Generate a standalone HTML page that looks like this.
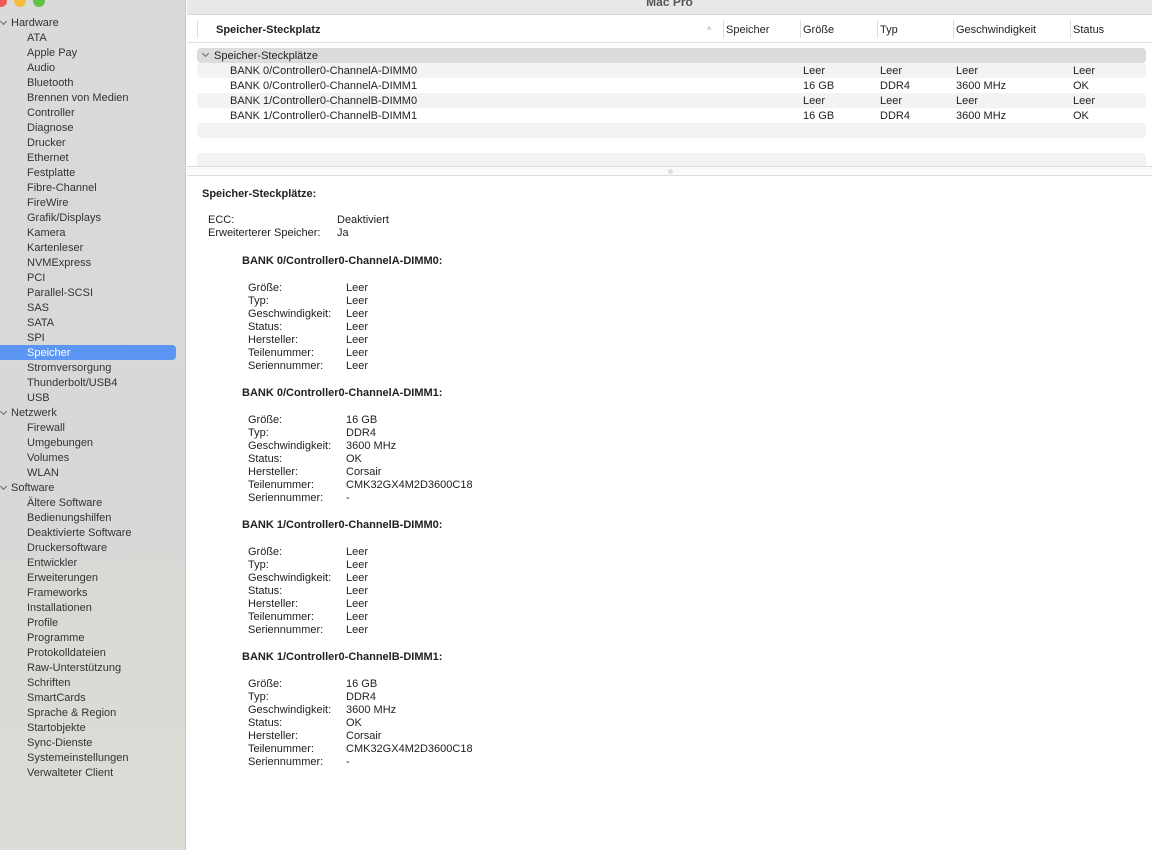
<!DOCTYPE html>
<html><head><meta charset="utf-8"><style>
*{margin:0;padding:0;box-sizing:border-box}
body{width:1152px;height:850px;overflow:hidden;font-family:"Liberation Sans",sans-serif;font-size:11px;color:#222;background:#fff;position:relative}
#side{position:absolute;left:0;top:0;width:186px;height:850px;background:linear-gradient(#dadada,#d8d8d6 60%,#dedcd6);border-right:1px solid #c8c8c8}
#side .l{position:absolute;left:0;width:186px;height:15px;line-height:15px;white-space:nowrap;color:#333}
#side .g{padding-left:11px}
#side .i{padding-left:27px}
#side .sel{left:0;width:176px;background:#5b96f5;color:#fff;border-radius:0 4px 4px 0}
.chev{position:absolute;left:1px;top:4px;width:5px;height:5px;border-right:1px solid #666;border-bottom:1px solid #666;transform:rotate(45deg)}
.dot{position:absolute;top:-5px;width:12px;height:12px;border-radius:50%}
#title{position:absolute;left:187px;top:0;width:965px;height:15px;background:#e8e8e8;border-bottom:1px solid #d8d8d8;text-align:center;font-weight:bold;color:#555;line-height:4px;font-size:12px}
#hdr{position:absolute;left:187px;top:15px;width:965px;height:28px;border-bottom:1px solid #e0e0e0;background:#fff}
#hdr span{position:absolute;top:9px;line-height:13px;color:#222}
.vs{position:absolute;top:5px;width:1px;height:18px;background:#ddd}
.row{position:absolute;left:197px;width:949px;height:15px;line-height:15px;border-radius:4px;white-space:nowrap}
.row span{position:absolute;top:1px}
.st{background:#f3f3f3}
.d{position:absolute;line-height:13px;white-space:nowrap}
</style></head><body>
<div id="side">
<div class="dot" style="left:-5px;background:#ee5a52"></div>
<div class="dot" style="left:14px;background:#f5bd3f"></div>
<div class="dot" style="left:33px;background:#5fc246"></div>
<div id="sl"></div>
</div>
<div id="title">Mac Pro</div>
<div id="hdr">
<div class="vs" style="left:10px"></div>
<span style="left:29px;font-weight:bold">Speicher-Steckplatz</span>
<span style="left:520px;color:#999;font-size:9px">^</span>
<div class="vs" style="left:536px"></div><span style="left:539px">Speicher</span>
<div class="vs" style="left:613px"></div><span style="left:616px">Größe</span>
<div class="vs" style="left:690px"></div><span style="left:693px">Typ</span>
<div class="vs" style="left:766px"></div><span style="left:769px">Geschwindigkeit</span>
<div class="vs" style="left:883px"></div><span style="left:886px">Status</span>
</div>
<div class="row" style="top:48px;background:#dcdcdc"><div class="chev" style="left:6px;top:3px"></div><span style="left:17px">Speicher-Steckplätze</span></div>
<div class="row st" style="top:63px"><span style="left:33px">BANK 0/Controller0-ChannelA-DIMM0</span><span style="left:606px">Leer</span><span style="left:683px">Leer</span><span style="left:759px">Leer</span><span style="left:876px">Leer</span></div>
<div class="row" style="top:78px"><span style="left:33px">BANK 0/Controller0-ChannelA-DIMM1</span><span style="left:606px">16 GB</span><span style="left:683px">DDR4</span><span style="left:759px">3600 MHz</span><span style="left:876px">OK</span></div>
<div class="row st" style="top:93px"><span style="left:33px">BANK 1/Controller0-ChannelB-DIMM0</span><span style="left:606px">Leer</span><span style="left:683px">Leer</span><span style="left:759px">Leer</span><span style="left:876px">Leer</span></div>
<div class="row" style="top:108px"><span style="left:33px">BANK 1/Controller0-ChannelB-DIMM1</span><span style="left:606px">16 GB</span><span style="left:683px">DDR4</span><span style="left:759px">3600 MHz</span><span style="left:876px">OK</span></div>
<div class="row st" style="top:123px"></div>
<div class="row st" style="top:153px;height:13px;border-radius:4px 4px 0 0"></div>
<div style="position:absolute;left:187px;top:166px;width:965px;height:10px;border-top:1px solid #ddd;border-bottom:1px solid #ddd;background:#fafafa"><div style="position:absolute;left:481px;top:2px;width:5px;height:5px;border-radius:50%;background:#ddd"></div></div>
<div id="det"></div>
<script>
var items=[["g","Hardware"],"ATA","Apple Pay","Audio","Bluetooth","Brennen von Medien","Controller","Diagnose","Drucker","Ethernet","Festplatte","Fibre-Channel","FireWire","Grafik/Displays","Kamera","Kartenleser","NVMExpress","PCI","Parallel-SCSI","SAS","SATA","SPI","Speicher","Stromversorgung","Thunderbolt/USB4","USB",["g","Netzwerk"],"Firewall","Umgebungen","Volumes","WLAN",["g","Software"],"Ältere Software","Bedienungshilfen","Deaktivierte Software","Druckersoftware","Entwickler","Erweiterungen","Frameworks","Installationen","Profile","Programme","Protokolldateien","Raw-Unterstützung","Schriften","SmartCards","Sprache & Region","Startobjekte","Sync-Dienste","Systemeinstellungen","Verwalteter Client"];
var h="";items.forEach(function(it,k){var t=15+k*15;if(Array.isArray(it)){h+='<div class="l g" style="top:'+t+'px;padding-top:1px"><div class="chev"></div>'+it[1]+'</div>';}else{h+='<div class="l i'+(it=="Speicher"?' sel':'')+'" style="top:'+t+'px;padding-top:1px">'+it+'</div>';}});
document.getElementById("sl").innerHTML=h;
var d='';function L(x,y,t,b){d+='<div class="d" style="left:'+x+'px;top:'+(y-5)+'px'+(b?';font-weight:bold':'')+'">'+t+'</div>';}
L(202,193,"Speicher-Steckplätze:",1);
L(208,219,"ECC:");L(337,219,"Deaktiviert");L(208,232,"Erweiterterer Speicher:");L(337,232,"Ja");
var banks=[["BANK 0/Controller0-ChannelA-DIMM0",0],["BANK 0/Controller0-ChannelA-DIMM1",1],["BANK 1/Controller0-ChannelB-DIMM0",0],["BANK 1/Controller0-ChannelB-DIMM1",1]];
var labs=["Größe:","Typ:","Geschwindigkeit:","Status:","Hersteller:","Teilenummer:","Seriennummer:"];
var full=["16 GB","DDR4","3600 MHz","OK","Corsair","CMK32GX4M2D3600C18","-"];
banks.forEach(function(b,i){var y=260+i*132;L(242,y,b[0]+":",1);labs.forEach(function(l,j){var yy=y+27+j*13;L(248,yy,l);L(346,yy,b[1]?full[j]:"Leer");});});
document.getElementById("det").innerHTML=d;
</script>
</body></html>
